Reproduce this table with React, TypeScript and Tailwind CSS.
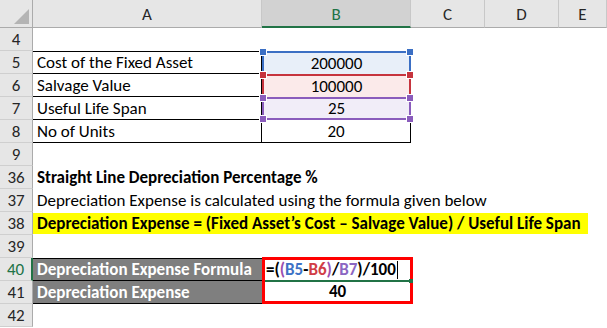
import React from 'react'

const COLS = ['A', 'B', 'C', 'D', 'E']

function ColHead({ label, active }: { label: string; active?: boolean }) {
  return (
    <div
      className={`flex items-center justify-center border-r border-[#c8c8c8] pt-[2px] ${
        active
          ? 'bg-[#d2d2d2] text-[#217346] border-b-2 border-b-[#217346]'
          : 'bg-[#e6e6e6] text-[#262626] border-b border-b-[#ababab]'
      }`}
    >
      {label}
    </div>
  )
}

function RowHead({ n, active }: { n: number; active?: boolean }) {
  return (
    <div
      className={`flex items-center justify-center bg-[#e6e6e6] border-b border-[#cfcfcf] ${
        active ? 'text-[#217346] border-r-2 border-r-[#217346]' : 'text-[#262626] border-r border-r-[#ababab]'
      }`}
    >
      {n}
    </div>
  )
}

function Empty() {
  return <div />
}

function Handle({ pos, bg }: { pos: string; bg: string }) {
  return <span className={`absolute h-[6px] w-[6px] outline outline-white ${pos} ${bg}`} />
}

// B5:B7 are outlined like references while a formula is being edited
function RefCell({
  value, border, handle, fill, last,
}: { value: string; border: string; handle: string; fill: string; last?: boolean }) {
  return (
    <div
      className={`relative flex items-center justify-center border-x-2 border-t-2 ${last ? 'border-b-2' : ''} ${border} ${fill}`}
    >
      {value}
      <Handle pos="-top-[4px] -left-[4px]" bg={handle} />
      <Handle pos="-top-[4px] -right-[4px]" bg={handle} />
      {last && (
        <>
          <Handle pos="-bottom-[4px] -left-[4px]" bg={handle} />
          <Handle pos="-bottom-[4px] -right-[4px]" bg={handle} />
        </>
      )}
    </div>
  )
}

export default function App() {
  return (
    <div className="h-[328px] w-[607px] overflow-hidden bg-white text-black [font-family:Carlito,Lato,sans-serif] text-[17px] leading-none">
      <div className="grid grid-cols-[33px_229px_149px_74px_74px_48px] grid-rows-[28px_repeat(13,23px)]">
        {/* header */}
        <div className="relative bg-[#e6e6e6] border-r border-[#ababab] border-b border-b-[#ababab]">
          <span className="absolute bottom-[3px] right-[3px] h-0 w-0 border-b-[15px] border-l-[15px] border-b-[#b4b4b4] border-l-transparent" />
        </div>
        {COLS.map(c => (
          <ColHead key={c} label={c} active={c === 'B'} />
        ))}

        {/* 4 */}
        <RowHead n={4} />
        <Empty /><Empty /><Empty /><Empty /><Empty />

        {/* 5 */}
        <RowHead n={5} />
        <div className="flex items-center border-y border-r border-black pl-1">Cost of the Fixed Asset</div>
        <RefCell value="200000" border="border-[#3b6fc4]" handle="bg-[#3b6fc4]" fill="bg-[#e8eff9]" />
        <Empty /><Empty /><Empty />

        {/* 6 */}
        <RowHead n={6} />
        <div className="flex items-center border-b border-r border-black pl-1">Salvage Value</div>
        <RefCell value="100000" border="border-[#c6343e]" handle="bg-[#c6343e]" fill="bg-[#fbeaea]" />
        <Empty /><Empty /><Empty />

        {/* 7 */}
        <RowHead n={7} />
        <div className="flex items-center border-b border-r border-black pl-1">Useful Life Span</div>
        <RefCell value="25" border="border-[#8a5cbc]" handle="bg-[#8a5cbc]" fill="bg-[#f1edf8]" last />
        <Empty /><Empty /><Empty />

        {/* 8 */}
        <RowHead n={8} />
        <div className="flex items-center border-b border-r border-black pl-1">No of Units</div>
        <div className="flex items-center justify-center border-b border-r border-black">20</div>
        <Empty /><Empty /><Empty />

        {/* 9 */}
        <RowHead n={9} />
        <Empty /><Empty /><Empty /><Empty /><Empty />

        {/* 36 */}
        <RowHead n={36} />
        <div className="col-span-5 flex items-center whitespace-nowrap pl-1 font-bold">
          Straight Line Depreciation Percentage %
        </div>

        {/* 37 */}
        <RowHead n={37} />
        <div className="col-span-5 flex items-center whitespace-nowrap pl-1">
          Depreciation Expense is calculated using the formula given below
        </div>

        {/* 38 */}
        <RowHead n={38} />
        <div className="col-span-5 flex items-center py-px">
          <div className="flex h-full w-[555px] items-center whitespace-nowrap bg-[#ffff00] pl-1 font-bold">
            Depreciation Expense = (Fixed Asset’s Cost – Salvage Value) / Useful Life Span
          </div>
        </div>

        {/* 39 */}
        <RowHead n={39} />
        <Empty /><Empty /><Empty /><Empty /><Empty />

        {/* 40 */}
        <RowHead n={40} active />
        <div className="flex items-center border-y border-black bg-[#7f7f7f] pl-1 font-bold text-white">
          Depreciation Expense Formula
        </div>
        <div className="row-span-2 flex flex-col border-[3px] border-[#ff0000] -mt-px -mr-[2px]">
          <div className="relative flex flex-1 items-center border-b-2 border-[#217346] pl-[1px] font-bold">
            <span>=(</span>
            <span className="text-[#9b4fb0]">(</span>
            <span className="text-[#3d72c6]">B5</span>
            <span>-</span>
            <span className="text-[#d13d46]">B6</span>
            <span className="text-[#9b4fb0]">)</span>
            <span>/</span>
            <span className="text-[#8b66c2]">B7</span>
            <span>)/100</span>
            <span className="ml-[1px] h-[18px] w-px bg-black" />
            <span className="absolute -bottom-[3px] -right-[3px] h-[4px] w-[4px] bg-[#217346]" />
          </div>
          <div className="flex flex-1 items-center justify-center font-bold">40</div>
        </div>
        <Empty /><Empty /><Empty />

        {/* 41 */}
        <RowHead n={41} />
        <div className="flex items-center border-b border-black bg-[#7f7f7f] pl-1 font-bold text-white">
          Depreciation Expense
        </div>
        <Empty /><Empty /><Empty />

        {/* 42 */}
        <RowHead n={42} />
        <Empty /><Empty /><Empty /><Empty /><Empty />
      </div>
    </div>
  )
}
